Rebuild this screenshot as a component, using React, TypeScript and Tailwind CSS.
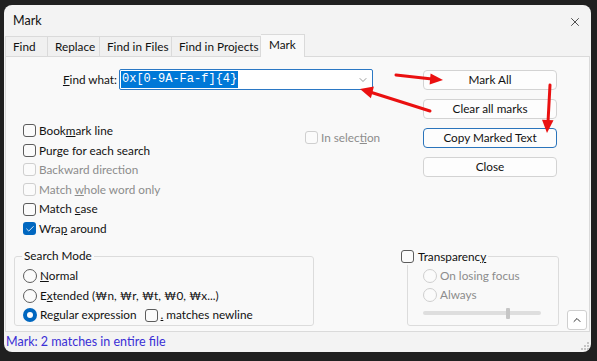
import { X, ChevronDown, ChevronUp, Check } from 'lucide-react'

function Box({ checked = false, disabled = false }: { checked?: boolean; disabled?: boolean }) {
    if (checked) {
        return (
            <span className="w-[13px] h-[13px] rounded-[3px] bg-[#0067c0] flex items-center justify-center shrink-0">
                <Check className="w-[10px] h-[10px] text-white" strokeWidth={2} />
            </span>
        )
    }
    return (
        <span
            className={`w-[13px] h-[13px] rounded-[3px] border shrink-0 bg-[#fbfbfb] ${disabled ? 'border-[#cfcfcf]' : 'border-[#5c5c5c]'}`}
        />
    )
}

function Radio({ checked = false, disabled = false }: { checked?: boolean; disabled?: boolean }) {
    if (checked) {
        return (
            <span className="w-[14px] h-[14px] rounded-full bg-[#0067c0] flex items-center justify-center shrink-0">
                <span className="w-[6px] h-[6px] rounded-full bg-white" />
            </span>
        )
    }
    return (
        <span
            className={`w-[14px] h-[14px] rounded-full border shrink-0 bg-[#fbfbfb] ${disabled ? 'border-[#cfcfcf]' : 'border-[#5c5c5c]'}`}
        />
    )
}

function CheckRow({ children, checked, disabled }: { children: React.ReactNode; checked?: boolean; disabled?: boolean }) {
    return (
        <div className="h-[19.6px] flex items-center gap-[3px] whitespace-nowrap">
            <Box checked={checked} disabled={disabled} />
            <span className={disabled ? 'text-[#8c8c8c]' : 'text-[#111]'}>{children}</span>
        </div>
    )
}

function RadioRow({ children, checked, disabled }: { children: React.ReactNode; checked?: boolean; disabled?: boolean }) {
    return (
        <div className="h-[19.6px] flex items-center gap-[3px] whitespace-nowrap">
            <Radio checked={checked} disabled={disabled} />
            <span className={disabled ? 'text-[#8c8c8c]' : 'text-[#111]'}>{children}</span>
        </div>
    )
}

function Btn({ children, primary }: { children: React.ReactNode; primary?: boolean }) {
    return (
        <div
            className={`h-[20px] rounded-[4px] border bg-[#fdfdfd] flex items-center justify-center text-[#111] ${primary ? 'border-[#2a74bb]' : 'border-[#d3d3d3]'}`}
        >
            {children}
        </div>
    )
}

const tabs = [
    { label: 'Find', w: 'w-[43px]' },
    { label: 'Replace', w: 'w-[52px]' },
    { label: 'Find in Files', w: 'w-[72px]' },
    { label: 'Find in Projects', w: 'w-[89px]' },
]

export default function App() {
    return (
        <div className="w-[597px] h-[361px] bg-[#202020] pl-[4px] pt-[5px] font-['Lato',sans-serif] text-[11.75px] leading-none">
            <div className="w-[587px] h-[347px] rounded-[8px] bg-[#f3f3f3] flex flex-col overflow-hidden relative">
                {/* title bar */}
                <div className="h-[31px] flex items-center justify-between pl-[9px] pr-[9px] pt-[2px] shrink-0">
                    <span className="text-[#111] text-[12.5px]">Mark</span>
                    <X className="w-[14px] h-[14px] text-[#1b1b1b]" strokeWidth={1.3} />
                </div>

                {/* tabs */}
                <div className="h-[20px] flex items-end pl-[1px] shrink-0">
                    {tabs.map(t => (
                        <div
                            key={t.label}
                            className={`${t.w} h-[20px] bg-[#f0f0f0] border-t border-r border-[#dadada] first:border-l flex items-center pl-[7px] whitespace-nowrap text-[#111]`}
                        >
                            {t.label}
                        </div>
                    ))}
                    <div className="w-[44px] h-[23px] bg-[#f9f9f9] border-t border-r border-[#dadada] mb-[-1px] relative z-10 flex items-center pl-[8px] pb-[2px] text-[#111]">
                        Mark
                    </div>
                </div>

                {/* panel */}
                <div className="h-[276px] mx-[1px] bg-[#f9f9f9] border border-[#dadada] flex flex-col shrink-0">
                    <div className="flex pt-[12px]">
                        <div className="w-[417px]">
                            <div className="flex items-center h-[21px]">
                                <span className="w-[111px] text-right text-[#111]">
                                    <u>F</u>ind what:
                                </span>
                                <div className="ml-[2px] w-[254px] h-[21px] border border-[#2b78c4] rounded-[2px] bg-white flex items-center pl-[1px] pr-[3px]">
                                    <span className="bg-[#0078d7] text-white font-['Liberation_Mono',monospace] text-[12px] leading-[17px] px-[1px]">
                                        0x[0-9A-Fa-f]{'{4}'}
                                    </span>
                                    <ChevronDown className="ml-auto w-[12px] h-[12px] text-[#555]" strokeWidth={1.2} />
                                </div>
                            </div>
                            <div className="flex mt-[31px]">
                                <div className="w-[299px] pl-[17px]">
                                    <CheckRow>Book<u>m</u>ark line</CheckRow>
                                    <CheckRow>Purge for each search</CheckRow>
                                    <CheckRow disabled>Backward direction</CheckRow>
                                    <CheckRow disabled>Match <u>w</u>hole word only</CheckRow>
                                    <CheckRow>Match <u>c</u>ase</CheckRow>
                                    <CheckRow checked>Wra<u>p</u> around</CheckRow>
                                </div>
                                <div className="mt-[7px]">
                                    <CheckRow disabled>In selec<u>t</u>ion</CheckRow>
                                </div>
                            </div>
                        </div>
                        <div className="w-[134px] flex flex-col gap-[9px] mt-[1px]">
                            <Btn>Mark All</Btn>
                            <Btn>Clear all marks</Btn>
                            <Btn primary>Copy Marked Text</Btn>
                            <Btn>Close</Btn>
                        </div>
                    </div>

                    <div className="mt-auto flex items-end">
                        <fieldset className="ml-[8px] w-[300px] border border-[#dcdcdc] rounded-[3px] mb-[5px] pl-[8px] pt-[2px]">
                            <legend className="ml-[-1px] px-[2px] leading-[16px] text-[#111]">Search Mode</legend>
                            <RadioRow><u>N</u>ormal</RadioRow>
                            <RadioRow>E<u>x</u>tended (₩n, ₩r, ₩t, ₩0, ₩x...)</RadioRow>
                            <div className="flex items-center">
                                <RadioRow checked>Re<u>g</u>ular expression</RadioRow>
                                <div className="ml-[8px]">
                                    <CheckRow><u>.</u> matches newline</CheckRow>
                                </div>
                            </div>
                        </fieldset>

                        <fieldset className="ml-[93px] w-[152px] border border-[#dcdcdc] rounded-[3px] mb-[5px] pl-[15px] pt-[1px] pb-[4px]">
                            <legend className="-ml-[22px] leading-[16px] flex items-center gap-[4px] pr-[2px] text-[#111]">
                                <Box />
                                <span>Transparenc<u>y</u></span>
                            </legend>
                            <RadioRow disabled>On losing focus</RadioRow>
                            <RadioRow disabled>Always</RadioRow>
                            <div className="h-[16px] flex items-center">
                                <div className="w-[118px] h-[4px] rounded-full bg-[#dedede] flex items-center">
                                    <div className="ml-[83px] w-[4px] h-[11px] rounded-[1px] bg-[#c6c6c6]" />
                                </div>
                            </div>
                        </fieldset>

                        <div className="ml-[8px] mb-[1px] w-[20px] h-[20px] rounded-[3px] border border-[#cfcfcf] bg-white flex items-center justify-center">
                            <ChevronUp className="w-[12px] h-[12px] text-[#1b1b1b]" strokeWidth={1.8} />
                        </div>
                    </div>
                </div>

                {/* status bar */}
                <div className="flex-1 flex items-center pl-[2px] relative">
                    <span className="text-[#3a2fd6] text-[12.5px]">Mark: 2 matches in entire file</span>
                    <svg className="absolute right-[2px] bottom-[2px]" width="8" height="8" viewBox="0 0 8 8">
                        <rect x="6" y="0" width="2" height="2" fill="#c4c4c4" />
                        <rect x="3" y="3" width="2" height="2" fill="#c4c4c4" />
                        <rect x="6" y="3" width="2" height="2" fill="#c4c4c4" />
                        <rect x="0" y="6" width="2" height="2" fill="#c4c4c4" />
                        <rect x="3" y="6" width="2" height="2" fill="#c4c4c4" />
                        <rect x="6" y="6" width="2" height="2" fill="#c4c4c4" />
                    </svg>
                </div>
            </div>

            {/* red annotation arrows */}
            <svg className="absolute left-0 top-0 pointer-events-none" width="597" height="361" viewBox="0 0 597 361">
                <g stroke="#ea1010" strokeWidth="3" strokeLinecap="round" fill="#ea1010">
                    <line x1="396" y1="75" x2="432" y2="79" />
                    <line x1="430" y1="111" x2="370" y2="92" />
                    <line x1="550" y1="85" x2="548" y2="122" />
                </g>
                <g fill="#ea1010">
                    <polygon points="443,80 429.6,84.6 430.6,73.6" />
                    <polygon points="360,89 373.9,86.6 370.9,98.2" />
                    <polygon points="547,133 542,119.7 553.5,120.3" />
                </g>
            </svg>
        </div>
    )
}
